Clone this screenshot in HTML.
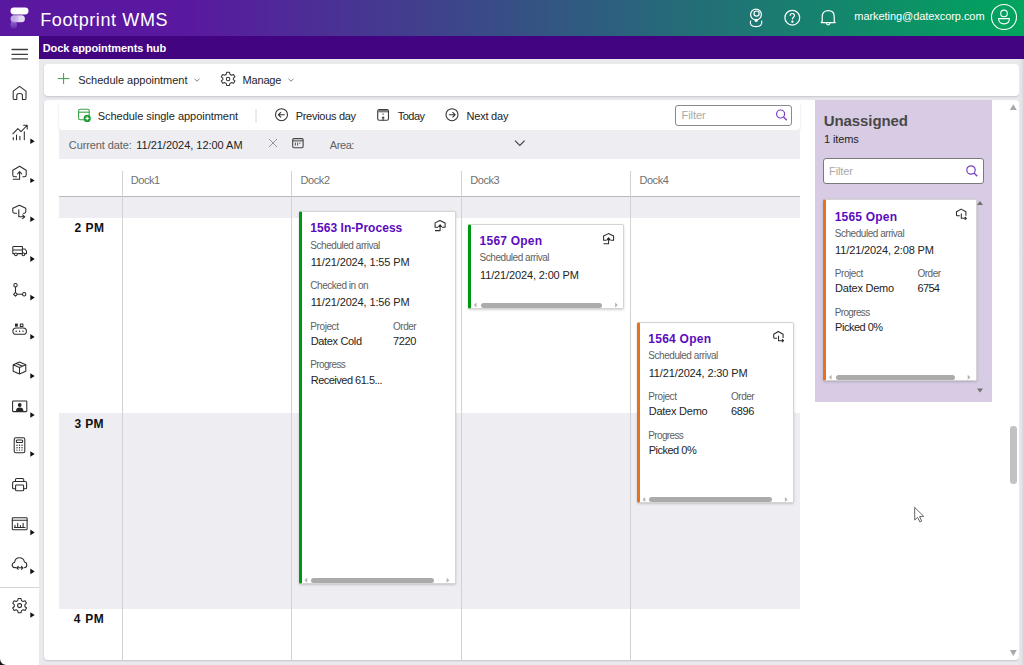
<!DOCTYPE html>
<html><head><meta charset="utf-8">
<style>
*{box-sizing:border-box;margin:0;padding:0}
html,body{width:1024px;height:665px;overflow:hidden;background:#e9e9ee;font-family:"Liberation Sans",sans-serif;color:#242424;position:relative}
.abs{position:absolute}
#hdr{left:0;top:0;width:1024px;height:36px;background:linear-gradient(90deg,#5a18a0 0px,#5a18a0 184px,#00a55d 1024px)}
#sub{left:39px;top:36px;width:985px;height:22.5px;background:#420480}
#side{left:0;top:36px;width:39px;height:629px;background:#fff}
#tb{left:44px;top:64px;width:975px;height:31.5px;background:#fff;border-radius:4px;box-shadow:0 1px 2px rgba(0,0,0,.16)}
#main{left:44px;top:100px;width:975px;height:560px;background:#fff;border-radius:4px;box-shadow:0 1px 2px rgba(0,0,0,.16)}
.txt{position:absolute;white-space:nowrap}
</style></head><body>
<div id="hdr" class="abs">
  <svg class="abs" style="left:0;top:0" width="40" height="36" viewBox="0 0 40 36">
    <defs><linearGradient id="lg2" x1="0" y1="0" x2="1" y2="0"><stop offset="0" stop-color="#b89ee0"/><stop offset="0.45" stop-color="#cdb9ea"/><stop offset="0.6" stop-color="#e2d6f2"/><stop offset="1" stop-color="#e8def5"/></linearGradient>
    <linearGradient id="lg3" x1="0" y1="0" x2="0" y2="1"><stop offset="0" stop-color="#a887d8" stop-opacity="0.75"/><stop offset="1" stop-color="#8a62c8" stop-opacity="0.25"/></linearGradient></defs>
    <rect x="10.5" y="7.6" width="18" height="6.8" rx="3.4" fill="#fff"/>
    <rect x="10.5" y="15.2" width="14.4" height="7" rx="3.5" fill="url(#lg2)"/>
    <rect x="10.5" y="21.4" width="6.4" height="7.4" rx="3.2" fill="url(#lg3)"/>
  </svg>
  <!-- location person icon -->
  <svg class="abs" style="left:0;top:0" width="1024" height="36" viewBox="0 0 1024 36" fill="none" stroke="#fff" stroke-width="1.2">
    <circle cx="756" cy="14.6" r="5.4"/>
    <circle cx="756.6" cy="13.6" r="2.6"/>
    <circle cx="756.2" cy="20.4" r="1.6" fill="#fff" stroke="none"/>
    <path d="M750.6 20.6 Q749 26.6 756 26.6 Q763 26.6 761.6 20.6"/>
    <circle cx="792.3" cy="17.7" r="7.4"/>
    <path d="M790.1 15.8 C790.1 14.4 791.1 13.5 792.3 13.5 C793.6 13.5 794.5 14.4 794.5 15.6 C794.5 17.1 792.4 17.3 792.4 19 L792.4 19.6"/>
    <circle cx="792.4" cy="21.6" r="0.6" fill="#fff"/>
    <path d="M822.2 21.4 L822.2 16.4 C822.2 12.8 824.6 10.6 828.2 10.6 C831.8 10.6 834.2 12.8 834.2 16.4 L834.2 21.4 L835.2 22.6 L821.2 22.6 Z" stroke-linejoin="round"/>
    <path d="M826.4 23 Q826.6 24.8 828.2 24.8 Q829.8 24.8 830 23"/>
  </svg>
  <svg class="abs" style="left:989.5px;top:3.1px" width="28" height="28" viewBox="0 0 28 28" fill="none" stroke="#fff" stroke-width="1.1">
    <circle cx="14" cy="14" r="12.5"/>
    <circle cx="14" cy="10.4" r="3.3"/>
    <path d="M8.6 15.6 L19.4 15.6 C19.4 19.4 17 20.9 14 20.9 C11 20.9 8.6 19.4 8.6 15.6 Z"/>
  </svg>
</div>
<div id="sub" class="abs"></div><div id="side" class="abs">
<svg class="abs" style="left:0;top:-36px" width="39" height="665" viewBox="0 0 39 665" fill="none" stroke="#2b2b2b" stroke-width="1.05" stroke-linejoin="round" stroke-linecap="round">
  <!-- hamburger -->
  <path d="M12 49.5H27.5M12 54.3H27.5M12 58.9H27.5" stroke-width="1.3" stroke="#3c3c3c"/>
  <!-- home -->
  <path d="M13.2 91.2 L19.6 86.3 L26 91.2 V98.6 Q26 99.4 25.2 99.4 H22.4 V95.2 Q22.4 93.4 19.6 93.4 Q16.8 93.4 16.8 95.2 V99.4 H14 Q13.2 99.4 13.2 98.6 Z"/>
  <!-- chart -->
  <path d="M12.8 133.8 L17.8 128.6 L21 131.6 L27 125.5 M23.6 125.3 H27.2 V128.9"/>
  <path d="M13.3 137.5V139.8M16.5 135V139.8M19.9 136.3V139.8M24.3 131.8V139.8"/>
  <!-- upload cloud -->
  <path d="M16.5 176.8 H14.5 Q12.8 176.8 12.8 175 V170.3 L19.6 166.3 L26.2 170.3 V175 Q26.2 176.8 24.5 176.8 H22.8"/>
  <path d="M19.6 172 V179.2 H13.2 M17.5 174 L19.6 171.6 L21.7 174"/>
  <!-- cloud down -->
  <path d="M16.5 213.2 H14.3 Q12.8 213.2 12.8 211.6 V208.3 L19.4 205.2 L25.8 208.3 V211.6 Q25.8 213.2 24.3 213.2 H23.5"/>
  <path d="M18.8 209.8 V216.8 H24.6 M22.6 214.8 L24.8 216.8 L22.6 218.6"/>
  <!-- truck -->
  <path d="M12.8 253.6 V247.2 Q12.8 246.4 13.6 246.4 H22.4 V253.6 M22.4 249 H25 L26.5 251.3 V253.6 H25.3 M12.8 253.6 H14.2 M17.6 253.6 H21.4 M12.8 250 H22.4" />
  <circle cx="15.9" cy="254.3" r="1.4"/>
  <circle cx="23.4" cy="254.3" r="1.4"/>
  <!-- flow -->
  <circle cx="15.5" cy="285.2" r="1.7"/>
  <path d="M15.5 286.9 V292.4 M15.5 292.4 L17.4 294.3 L15.5 296.2 L13.6 294.3 Z M17.4 294.3 H22.5"/>
  <circle cx="24.2" cy="294.3" r="1.7"/>
  <!-- conveyor -->
  <rect x="15" y="323.6" width="2.8" height="3" fill="#242424" stroke="none"/>
  <rect x="20.3" y="323.9" width="2.6" height="2.6"/>
  <rect x="12.9" y="328" width="13.5" height="6.3" rx="3.1"/>
  <circle cx="16.2" cy="331.2" r="0.7" fill="#242424" stroke="none"/>
  <circle cx="19.6" cy="331.2" r="0.7" fill="#242424" stroke="none"/>
  <circle cx="23" cy="331.2" r="0.7" fill="#242424" stroke="none"/>
  <!-- box -->
  <path d="M19.5 362 L25.8 364.8 V371.3 L19.5 374 L13.2 371.3 V364.8 Z M13.2 364.8 L19.5 367.6 L25.8 364.8 M19.5 367.6 V374 M16.4 363.4 L22.6 366.2"/>
  <!-- person card -->
  <rect x="12.6" y="401" width="14.2" height="10.6" rx="0.6"/>
  <circle cx="19.7" cy="405" r="1.9" fill="#242424" stroke="none"/>
  <path d="M16 411 Q16 407.6 19.7 407.6 Q23.4 407.6 23.4 411 Z" fill="#242424" stroke="none"/>
  <!-- calculator -->
  <rect x="14.2" y="437.8" width="10.6" height="15" rx="1.6"/>
  <rect x="16.3" y="440" width="6.4" height="2.4" rx="1"/>
  <g fill="#242424" stroke="none">
  <circle cx="17" cy="445.3" r="0.7"/><circle cx="19.5" cy="445.3" r="0.7"/><circle cx="22" cy="445.3" r="0.7"/>
  <circle cx="17" cy="447.7" r="0.7"/><circle cx="19.5" cy="447.7" r="0.7"/><circle cx="22" cy="447.7" r="0.7"/>
  <circle cx="17" cy="450.1" r="0.7"/><circle cx="19.5" cy="450.1" r="0.7"/><circle cx="22" cy="450.1" r="0.7"/>
  </g>
  <!-- printer -->
  <path d="M15.5 481.5 V479.6 Q15.5 478.4 16.7 478.4 H22.5 Q23.7 478.4 23.7 479.6 V481.5"/>
  <path d="M15.6 488.8 H13.6 Q12.6 488.8 12.6 487.8 V483 Q12.6 481.5 14.1 481.5 H25.1 Q26.6 481.5 26.6 483 V487.8 Q26.6 488.8 25.6 488.8 H23.6"/>
  <rect x="15.6" y="485" width="8" height="5.8" rx="0.8"/>
  <!-- report -->
  <rect x="12.3" y="517.7" width="14.8" height="12" rx="0.6"/>
  <path d="M12.3 520.3 H27.1 M15 527.4V525.2 M17.7 527.4V523.2 M20.4 527.4V525.6 M23.1 527.4V523.2 M14.4 527.4 H25"/>
  <!-- cloud arrows -->
  <path d="M15.6 567.6 H14.8 Q12.2 567.6 12.2 565 Q12.2 562.6 14.6 562.4 Q15.2 557.8 19.5 557.8 Q23.6 557.8 24.4 562 Q26.8 562.4 26.8 565 Q26.8 567.6 24.6 567.6"/>
  <path d="M16.6 567.8 H23 M18.2 566.3 L16.6 567.8 L18.2 569.3 M21.4 566.3 L23 567.8 L21.4 569.3"/>
  <!-- separator -->
  <path d="M0 587.5 H39" stroke="#d6d6d6" stroke-width="1" stroke-linecap="butt"/>
  <!-- gear -->
  <path d="M18.2 598.5 H21 L21.5 600.6 L23.1 601.5 L25.1 600.8 L26.5 603.2 L24.9 604.7 V606.5 L26.5 608 L25.1 610.4 L23.1 609.7 L21.5 610.6 L21 612.8 H18.2 L17.7 610.6 L16.1 609.7 L14.1 610.4 L12.7 608 L14.3 606.5 V604.7 L12.7 603.2 L14.1 600.8 L16.1 601.5 L17.7 600.6 Z"/>
  <circle cx="19.6" cy="605.6" r="2"/>
  <!-- arrows -->
  <g fill="#111" stroke="none">
    <path d="M30.3 138.6 L34.7 141.3 L30.3 144.1Z"/>
    <path d="M30.3 177.9 L34.7 180.5 L30.3 183.1Z"/>
    <path d="M30.3 216.6 L34.7 219.3 L30.3 221.9Z"/>
    <path d="M30.3 256.1 L34.7 259 L30.3 262Z"/>
    <path d="M30.3 294.8 L34.7 297.6 L30.3 300.4Z"/>
    <path d="M30.3 334.1 L34.7 336.9 L30.3 339.6Z"/>
    <path d="M30.3 373.2 L34.7 376 L30.3 378.8Z"/>
    <path d="M30.3 412.2 L34.7 415 L30.3 417.8Z"/>
    <path d="M30.3 451.2 L34.7 454 L30.3 456.8Z"/>
    <path d="M30.3 529.6 L34.7 532.4 L30.3 535.2Z"/>
    <path d="M30.3 568.6 L34.7 571.4 L30.3 574.2Z"/>
    <path d="M30.3 612.2 L34.7 615 L30.3 617.8Z"/>
  </g>
  <path d="M0 658.8 A6.2 6.2 0 0 0 6.2 665 L0 665 Z" fill="#141414" stroke="none"/>
</svg>
</div>
<div style="position:absolute;left:0;top:0"><div class="txt" style="left:40.20px;top:10.76px;font-size:18px;line-height:18px;color:#fff;letter-spacing:0.606px;">Footprint WMS</div>
<div class="txt" style="left:854.30px;top:11.29px;font-size:11px;line-height:11px;color:#fff;letter-spacing:-0.060px;">marketing@datexcorp.com</div>
<div class="txt" style="left:42.70px;top:43.09px;font-size:11px;line-height:11px;color:#fff;font-weight:bold;letter-spacing:-0.089px;">Dock appointments hub</div>
</div><div id="tb" class="abs"></div><div id="main" class="abs"></div><div class="txt" style="left:78.30px;top:74.69px;font-size:11px;line-height:11px;color:#242424;letter-spacing:-0.014px;">Schedule appointment</div>
<div class="txt" style="left:242.60px;top:74.69px;font-size:11px;line-height:11px;color:#242424;letter-spacing:-0.191px;">Manage</div>
<div class="abs" style="left:59px;top:101px;width:741px;height:29px;background:#fff;border-radius:3px;box-shadow:0 1px 2px rgba(0,0,0,.18)"></div><div class="abs" style="left:59px;top:130px;width:741px;height:28.5px;background:#ededf2"></div><div class="txt" style="left:97.70px;top:110.59px;font-size:11px;line-height:11px;color:#242424;letter-spacing:-0.033px;">Schedule single appointment</div>
<div class="txt" style="left:295.70px;top:110.59px;font-size:11px;line-height:11px;color:#242424;letter-spacing:-0.290px;">Previous day</div>
<div class="txt" style="left:397.70px;top:110.59px;font-size:11px;line-height:11px;color:#242424;letter-spacing:-0.513px;">Today</div>
<div class="txt" style="left:466.60px;top:110.59px;font-size:11px;line-height:11px;color:#242424;letter-spacing:-0.230px;">Next day</div>
<div class="abs" style="left:675.2px;top:105.2px;width:117.3px;height:20.4px;border:1px solid #8a8a8a;border-radius:3px;background:#fff"></div><div class="txt" style="left:681.60px;top:110.29px;font-size:11px;line-height:11px;color:#a8a8a8;letter-spacing:-0.089px;">Filter</div>
<div class="txt" style="left:68.80px;top:139.69px;font-size:11px;line-height:11px;color:#616161;letter-spacing:-0.092px;">Current date:</div>
<div class="txt" style="left:136.30px;top:139.69px;font-size:11px;line-height:11px;color:#242424;letter-spacing:-0.028px;">11/21/2024, 12:00 AM</div>
<div class="txt" style="left:329.80px;top:139.69px;font-size:11px;line-height:11px;color:#616161;letter-spacing:-0.423px;">Area:</div>
<div class="abs" style="left:59px;top:197px;width:741px;height:21px;background:#ededf2"></div><div class="abs" style="left:59px;top:413px;width:741px;height:195.5px;background:#ededf2"></div><div class="abs" style="left:59px;top:196px;width:741px;height:1px;background:#b9b9b9"></div><div class="abs" style="left:122.0px;top:171px;width:1px;height:489px;background:#d2d2d2"></div><div class="abs" style="left:291.0px;top:171px;width:1px;height:489px;background:#d2d2d2"></div><div class="abs" style="left:461.0px;top:171px;width:1px;height:489px;background:#d2d2d2"></div><div class="abs" style="left:630.0px;top:171px;width:1px;height:489px;background:#d2d2d2"></div><div class="txt" style="left:130.70px;top:174.69px;font-size:11px;line-height:11px;color:#707070;letter-spacing:-0.420px;">Dock1</div>
<div class="txt" style="left:300.50px;top:174.69px;font-size:11px;line-height:11px;color:#707070;letter-spacing:-0.420px;">Dock2</div>
<div class="txt" style="left:470.20px;top:174.69px;font-size:11px;line-height:11px;color:#707070;letter-spacing:-0.420px;">Dock3</div>
<div class="txt" style="left:639.40px;top:174.69px;font-size:11px;line-height:11px;color:#707070;letter-spacing:-0.420px;">Dock4</div>
<div class="txt" style="left:74.60px;top:222.04px;font-size:12px;line-height:12px;color:#111;font-weight:bold;letter-spacing:0.464px;">2 PM</div>
<div class="txt" style="left:74.60px;top:417.84px;font-size:12px;line-height:12px;color:#111;font-weight:bold;letter-spacing:0.330px;">3 PM</div>
<div class="txt" style="left:73.80px;top:613.24px;font-size:12px;line-height:12px;color:#111;font-weight:bold;letter-spacing:0.664px;">4 PM</div>
<div class="abs" style="left:815px;top:100px;width:177px;height:302px;background:#d8cce4"></div><div class="txt" style="left:823.80px;top:112.80px;font-size:15px;line-height:15px;color:#484848;font-weight:bold;letter-spacing:-0.091px;">Unassigned</div>
<div class="txt" style="left:824.00px;top:134.39px;font-size:11px;line-height:11px;color:#242424;letter-spacing:-0.126px;">1 items</div>
<div class="abs" style="left:823.4px;top:157.5px;width:160.5px;height:26px;border:1px solid #7a7a7a;border-radius:3px;background:#fff"></div><div class="txt" style="left:829.00px;top:165.69px;font-size:11px;line-height:11px;color:#a8a8a8;letter-spacing:-0.089px;">Filter</div>
<div class="abs" style="left:1019px;top:59px;width:5px;height:606px;background:linear-gradient(90deg,#e8e8ed,#e2e2e7 50%,#d2d2d8)"></div><div class="abs" style="left:1010px;top:426px;width:6.6px;height:57.6px;background:#c2c2c2;border-radius:3.3px"></div><div class="abs" style="left:299px;top:211px;width:157px;height:373px;background:#fff;border:1px solid #d4d4d4;border-left:3.4px solid #009812;border-radius:2px;box-shadow:0 1px 2.5px rgba(0,0,0,.18)"></div><div class="txt" style="left:310.30px;top:222.14px;font-size:12px;line-height:12px;color:#5c0cc0;font-weight:bold;letter-spacing:0.043px;">1563 In-Process</div>
<div class="txt" style="left:310.30px;top:240.53px;font-size:10px;line-height:10px;color:#616161;letter-spacing:-0.454px;">Scheduled arrival</div>
<div class="txt" style="left:310.70px;top:257.19px;font-size:11px;line-height:11px;color:#242424;letter-spacing:-0.135px;">11/21/2024, 1:55 PM</div>
<div class="txt" style="left:310.30px;top:280.94px;font-size:10px;line-height:10px;color:#616161;letter-spacing:-0.469px;">Checked in on</div>
<div class="txt" style="left:310.70px;top:297.39px;font-size:11px;line-height:11px;color:#242424;letter-spacing:-0.135px;">11/21/2024, 1:56 PM</div>
<div class="txt" style="left:310.30px;top:321.54px;font-size:10px;line-height:10px;color:#616161;letter-spacing:-0.404px;">Project</div>
<div class="txt" style="left:393.00px;top:321.54px;font-size:10px;line-height:10px;color:#616161;letter-spacing:-0.466px;">Order</div>
<div class="txt" style="left:310.70px;top:335.99px;font-size:11px;line-height:11px;color:#242424;letter-spacing:-0.335px;">Datex Cold</div>
<div class="txt" style="left:393.00px;top:335.99px;font-size:11px;line-height:11px;color:#242424;letter-spacing:-0.357px;">7220</div>
<div class="txt" style="left:310.30px;top:360.24px;font-size:10px;line-height:10px;color:#616161;letter-spacing:-0.645px;">Progress</div>
<div class="txt" style="left:310.70px;top:375.19px;font-size:11px;line-height:11px;color:#242424;letter-spacing:-0.500px;">Received 61.5...</div>
<div class="abs" style="left:311.4px;top:577.8px;width:122.6px;height:5px;background:#ababab;border-radius:2.5px"></div><div class="abs" style="left:468px;top:224px;width:156px;height:85px;background:#fff;border:1px solid #d4d4d4;border-left:3.4px solid #009812;border-radius:2px;box-shadow:0 1px 2.5px rgba(0,0,0,.18)"></div><div class="txt" style="left:479.60px;top:235.24px;font-size:12px;line-height:12px;color:#5c0cc0;font-weight:bold;letter-spacing:0.225px;">1567 Open</div>
<div class="txt" style="left:479.60px;top:253.23px;font-size:10px;line-height:10px;color:#616161;letter-spacing:-0.454px;">Scheduled arrival</div>
<div class="txt" style="left:480.00px;top:269.89px;font-size:11px;line-height:11px;color:#242424;letter-spacing:-0.135px;">11/21/2024, 2:00 PM</div>
<div class="abs" style="left:480.7px;top:302.5px;width:121.80000000000001px;height:5px;background:#ababab;border-radius:2.5px"></div><div class="abs" style="left:637px;top:322px;width:157px;height:181px;background:#fff;border:1px solid #d4d4d4;border-left:3.4px solid #e8701e;border-radius:2px;box-shadow:0 1px 2.5px rgba(0,0,0,.18)"></div><div class="txt" style="left:648.30px;top:332.94px;font-size:12px;line-height:12px;color:#5c0cc0;font-weight:bold;letter-spacing:0.250px;">1564 Open</div>
<div class="txt" style="left:648.30px;top:351.34px;font-size:10px;line-height:10px;color:#616161;letter-spacing:-0.454px;">Scheduled arrival</div>
<div class="txt" style="left:648.70px;top:367.89px;font-size:11px;line-height:11px;color:#242424;letter-spacing:-0.135px;">11/21/2024, 2:30 PM</div>
<div class="txt" style="left:648.30px;top:391.84px;font-size:10px;line-height:10px;color:#616161;letter-spacing:-0.404px;">Project</div>
<div class="txt" style="left:731.00px;top:391.84px;font-size:10px;line-height:10px;color:#616161;letter-spacing:-0.466px;">Order</div>
<div class="txt" style="left:648.70px;top:405.99px;font-size:11px;line-height:11px;color:#242424;letter-spacing:-0.237px;">Datex Demo</div>
<div class="txt" style="left:731.00px;top:405.99px;font-size:11px;line-height:11px;color:#242424;letter-spacing:-0.357px;">6896</div>
<div class="txt" style="left:648.30px;top:431.14px;font-size:10px;line-height:10px;color:#616161;letter-spacing:-0.645px;">Progress</div>
<div class="txt" style="left:648.70px;top:444.89px;font-size:11px;line-height:11px;color:#242424;letter-spacing:-0.496px;">Picked 0%</div>
<div class="abs" style="left:649.4px;top:496.90000000000003px;width:122.9px;height:5px;background:#ababab;border-radius:2.5px"></div><div class="abs" style="left:823px;top:199px;width:154px;height:182px;background:#fff;border:1px solid #d4d4d4;border-left:3.4px solid #e8701e;border-radius:2px;box-shadow:0 1px 2.5px rgba(0,0,0,.18)"></div><div class="txt" style="left:834.70px;top:210.54px;font-size:12px;line-height:12px;color:#5c0cc0;font-weight:bold;letter-spacing:0.213px;">1565 Open</div>
<div class="txt" style="left:834.70px;top:228.53px;font-size:10px;line-height:10px;color:#616161;letter-spacing:-0.454px;">Scheduled arrival</div>
<div class="txt" style="left:835.10px;top:244.79px;font-size:11px;line-height:11px;color:#242424;letter-spacing:-0.135px;">11/21/2024, 2:08 PM</div>
<div class="txt" style="left:834.70px;top:269.13px;font-size:10px;line-height:10px;color:#616161;letter-spacing:-0.404px;">Project</div>
<div class="txt" style="left:917.40px;top:269.13px;font-size:10px;line-height:10px;color:#616161;letter-spacing:-0.466px;">Order</div>
<div class="txt" style="left:835.10px;top:283.29px;font-size:11px;line-height:11px;color:#242424;letter-spacing:-0.237px;">Datex Demo</div>
<div class="txt" style="left:917.40px;top:283.29px;font-size:11px;line-height:11px;color:#242424;letter-spacing:-0.624px;">6754</div>
<div class="txt" style="left:834.70px;top:308.24px;font-size:10px;line-height:10px;color:#616161;letter-spacing:-0.645px;">Progress</div>
<div class="txt" style="left:835.10px;top:322.29px;font-size:11px;line-height:11px;color:#242424;letter-spacing:-0.496px;">Picked 0%</div>
<div class="abs" style="left:835.8px;top:374.79999999999995px;width:119.30000000000001px;height:5px;background:#ababab;border-radius:2.5px"></div><svg class="abs" style="left:0;top:0;pointer-events:none" width="1024" height="665" viewBox="0 0 1024 665" fill="none"><path d="M57.8 78.6H69.4M63.6 73.1V84.1" stroke="#34a04a" stroke-width="1"/><path d="M194.5 78.8L197 81.2L199.5 78.8M288.5 78.8L291 81.2L293.5 78.8" stroke="#707070" stroke-width="0.9"/><g transform="translate(228.1,78.9) scale(0.92)"><path d="M-1.5 -7.3 H1.5 L2 -5 L3.7 -4 L5.9 -4.8 L7.4 -2.2 L5.7 -0.8 V0.8 L7.4 2.2 L5.9 4.8 L3.7 4 L2 5 L1.5 7.3 H-1.5 L-2 5 L-3.7 4 L-5.9 4.8 L-7.4 2.2 L-5.7 0.8 V-0.8 L-7.4 -2.2 L-5.9 -4.8 L-3.7 -4 L-2 -5 Z" stroke="#333" stroke-width="1.1" stroke-linejoin="round"/><circle r="1.9" stroke="#333" stroke-width="1.1"/></g><rect x="78.6" y="109.2" width="10.6" height="10.6" rx="1.6" stroke="#3aa04a" stroke-width="1.1"/><path d="M78.6 112.2H89.2" stroke="#3aa04a" stroke-width="1.1"/><circle cx="87.2" cy="118.4" r="3.6" fill="#1f9d3a"/><path d="M85.4 118.4H89M87.2 116.6V120.2" stroke="#fff" stroke-width="1"/><path d="M256 109V122.6" stroke="#d8d8d8" stroke-width="1"/><circle cx="281.5" cy="114.7" r="6" stroke="#333" stroke-width="1.1"/><path d="M284.6 114.7H278.6M281 112.1L278.4 114.7L281 117.3" stroke="#333" stroke-width="1.1"/><rect x="377.7" y="109.5" width="10.8" height="10.8" rx="1.6" stroke="#3a3a3a" stroke-width="1.1"/><rect x="378.2" y="110" width="9.8" height="2.4" fill="#7a7a7a"/><path d="M383.1 113.6V114.8M383.1 118V120.4" stroke="#3a3a3a" stroke-width="1.1"/><path d="M381.3 118.3L383.1 116.3L384.9 118.3Z" fill="#3a3a3a"/><circle cx="452" cy="114.7" r="6" stroke="#333" stroke-width="1.1"/><path d="M448.9 114.7H454.9M452.5 112.1L455.1 114.7L452.5 117.3" stroke="#333" stroke-width="1.1"/><circle cx="780.6" cy="114" r="4" stroke="#7a3fc0" stroke-width="1.2"/><path d="M783.5 117L786.8 120.3" stroke="#7a3fc0" stroke-width="1.3"/><path d="M269 139L277 147M277 139L269 147" stroke="#9696a2" stroke-width="1"/><rect x="292.7" y="138.6" width="10.4" height="9.2" rx="1.2" stroke="#444" stroke-width="1.1"/><path d="M292.7 140.9H303.1" stroke="#444" stroke-width="1"/><path d="M295.4 142.6V145.6M297.6 142.6V145.6M299.8 142.6V143.8" stroke="#555" stroke-width="1"/><path d="M515 140.6L519.8 145.4L524.6 140.6" stroke="#444" stroke-width="1.2"/><circle cx="971" cy="170" r="4.2" stroke="#7a3fc0" stroke-width="1.2"/><path d="M974 173L977.3 176.3" stroke="#7a3fc0" stroke-width="1.3"/><path d="M977 205L980 201L983 205Z M977 388.5L980 392.5L983 388.5Z" fill="#707070"/><path d="M1009.8 110L1013.3 104.2L1016.8 110Z M1009.8 650L1013.3 656L1016.8 650Z" fill="#a9a9a9"/><g transform="translate(434.3,220.10000000000002)" stroke="#2a2a2a" stroke-width="1.05" stroke-linejoin="round"><path d="M3.9 7.1H0.8V2.8L5.6 0.4L10.8 2.8V7.1H7.6"/><path d="M5.8 5.2V10.5H0.7"/><path d="M4.4 6.4L5.8 4.6L7.2 6.4Z" fill="#2a2a2a"/></g><path d="M307.2 577.8L304.4 580.3L307.2 582.8Z M446.6 577.8L449.40000000000003 580.3L446.6 582.8Z" fill="#b4b4b4"/><g transform="translate(602.8000000000001,233.20000000000002)" stroke="#2a2a2a" stroke-width="1.05" stroke-linejoin="round"><path d="M3.9 7.1H0.8V2.8L5.6 0.4L10.8 2.8V7.1H7.6"/><path d="M5.8 5.2V10.5H0.7"/><path d="M4.4 6.4L5.8 4.6L7.2 6.4Z" fill="#2a2a2a"/></g><path d="M476.5 302.5L473.7 305.0L476.5 307.5Z M615.1 302.5L617.9 305.0L615.1 307.5Z" fill="#b4b4b4"/><g transform="translate(772.6,330.90000000000003)" stroke="#2a2a2a" stroke-width="1.05" stroke-linejoin="round"><path d="M4.4 7.3H1.7Q1.1 7.3 1.1 6.7V3.3L5.7 0.6L10.5 3.3V7.2"/><path d="M5.9 4.9V9.8H11M9.4 8.3L11 9.8L9.4 11.3"/></g><path d="M645.2 496.90000000000003L642.4 499.40000000000003L645.2 501.90000000000003Z M784.9 496.90000000000003L787.6999999999999 499.40000000000003L784.9 501.90000000000003Z" fill="#b4b4b4"/><g transform="translate(955.4000000000001,208.5)" stroke="#2a2a2a" stroke-width="1.05" stroke-linejoin="round"><path d="M4.4 7.3H1.7Q1.1 7.3 1.1 6.7V3.3L5.7 0.6L10.5 3.3V7.2"/><path d="M5.9 4.9V9.8H11M9.4 8.3L11 9.8L9.4 11.3"/></g><path d="M831.6 374.79999999999995L828.8 377.29999999999995L831.6 379.79999999999995Z M967.7 374.79999999999995L970.5 377.29999999999995L967.7 379.79999999999995Z" fill="#b4b4b4"/><path d="M914.7 507.4L914.7 520L917.6 517.4L919.9 522L921.7 521.1L919.6 516.6L923.7 516.3Z" fill="#fff" stroke="#555" stroke-width="0.9" stroke-linejoin="round"/></svg></body></html>
